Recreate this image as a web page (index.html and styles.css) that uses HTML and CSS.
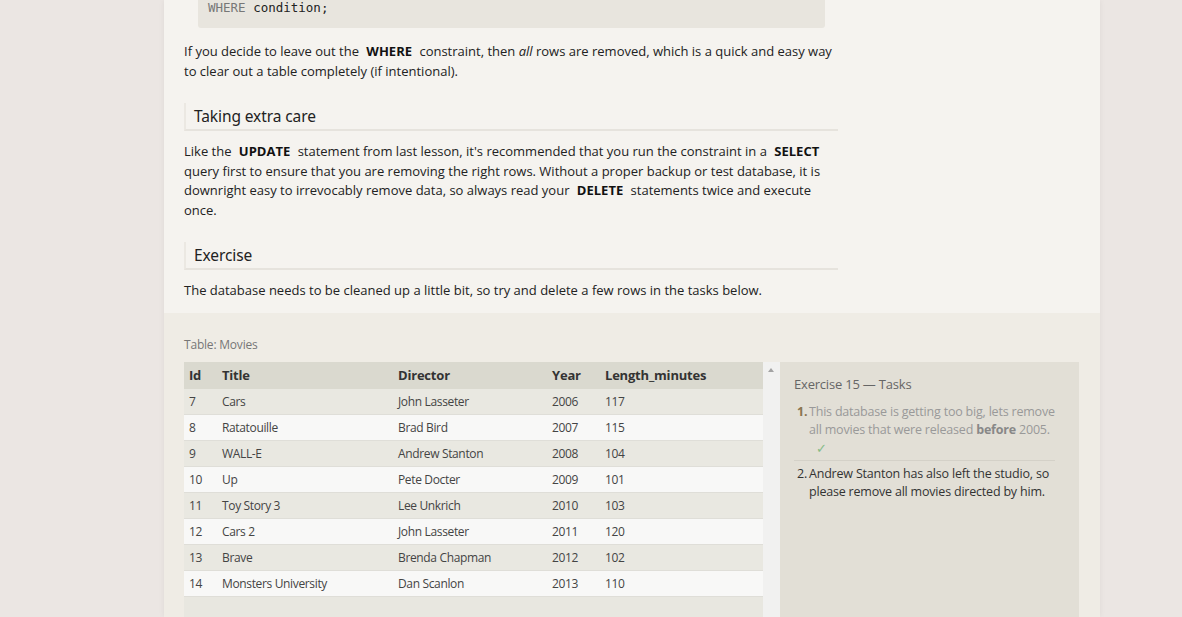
FILE: index.html
```html
<!DOCTYPE html>
<html>
<head>
<meta charset="utf-8">
<link rel="stylesheet" href="styles.css">
</head>
<body>
<div class="page">
  <div class="lesson">
    <pre class="code"><span class="kw">WHERE</span> condition;</pre>
    <p>If you decide to leave out the <b class="sql">WHERE</b> constraint, then <i>all</i> rows are removed, which is a quick and easy way to clear out a table completely (if intentional).</p>
    <h3 class="heading">Taking extra care</h3>
    <p>Like the <b class="sql">UPDATE</b> statement from last lesson, it's recommended that you run the constraint in a <b class="sql">SELECT</b> query first to ensure that you are removing the right rows. Without a proper backup or test database, it is downright easy to irrevocably remove data, so always read your <b class="sql">DELETE</b> statements twice and execute once.</p>
    <h3 class="heading">Exercise</h3>
    <p>The database needs to be cleaned up a little bit, so try and delete a few rows in the tasks below.</p>
  </div>
  <div class="exercise">
    <div class="table-label">Table: Movies</div>
    <div class="workarea">
      <div class="table-wrap">
        <table class="movies">
          <thead>
            <tr><th class="c-id">Id</th><th class="c-title">Title</th><th class="c-dir">Director</th><th class="c-year">Year</th><th>Length_minutes</th></tr>
          </thead>
          <tbody>
            <tr><td>7</td><td>Cars</td><td>John Lasseter</td><td>2006</td><td>117</td></tr>
            <tr><td>8</td><td>Ratatouille</td><td>Brad Bird</td><td>2007</td><td>115</td></tr>
            <tr><td>9</td><td>WALL-E</td><td>Andrew Stanton</td><td>2008</td><td>104</td></tr>
            <tr><td>10</td><td>Up</td><td>Pete Docter</td><td>2009</td><td>101</td></tr>
            <tr><td>11</td><td>Toy Story 3</td><td>Lee Unkrich</td><td>2010</td><td>103</td></tr>
            <tr><td>12</td><td>Cars 2</td><td>John Lasseter</td><td>2011</td><td>120</td></tr>
            <tr><td>13</td><td>Brave</td><td>Brenda Chapman</td><td>2012</td><td>102</td></tr>
            <tr><td>14</td><td>Monsters University</td><td>Dan Scanlon</td><td>2013</td><td>110</td></tr>
          </tbody>
        </table>
      </div>
      <div class="scrollbar"><span class="arrow"></span></div>
      <div class="tasks">
        <div class="tasks-title">Exercise 15 — Tasks</div>
        <ol class="task-list">
          <li class="done"><span class="num">1.</span><div>This database is getting too big, lets remove all movies that were released <b>before</b> 2005.<div class="check">✓</div></div></li>
          <li><span class="num">2.</span><div>Andrew Stanton has also left the studio, so please remove all movies directed by him.</div></li>
        </ol>
      </div>
    </div>
  </div>
</div>
</body>
</html>
```
FILE: styles.css
```css
html, body {
  margin: 0;
  padding: 0;
  background: #ebe6e3;
  height: 100%;
  overflow: hidden;
}
body {
  font-family: "Open Sans", "Noto Sans", sans-serif;
  color: #222;
}
.page {
  width: 936px;
  margin-left: 164px;
  background: #f5f3ef;
  box-shadow: 0 0 6px rgba(0,0,0,0.06);
  height: 617px;
  overflow: hidden;
  display: flex;
  flex-direction: column;
}
.lesson {
  padding: 0 262px 0 20px;
}
.code {
  margin: 0 0 0 14px;
  width: 627px;
  box-sizing: border-box;
  background: #e8e5de;
  height: 28px;
  padding: 0 10px;
  font-family: "DejaVu Sans Mono", monospace;
  font-size: 12.5px;
  line-height: 16px;
  color: #222;
  border-radius: 0 0 3px 3px;
}
.code .kw { color: #777; }
p {
  margin: 14px 0 0 0;
  font-size: 13px;
  line-height: 19.5px;
  letter-spacing: 0;
}
.sql {
  font-weight: 700;
  padding: 0 4px;
  color: #111;
}
.heading {
  margin: 22px 0 0 0;
  font-family: "Noto Sans", sans-serif;
  font-weight: 400;
  font-size: 15.5px;
  line-height: 26px;
  padding: 0 0 0 8px;
  border-left: 2px solid #ebe8e2;
  border-bottom: 2px solid #e6e3dd;
  color: #222;
  letter-spacing: -0.1px;
}
.heading + p { margin-top: 11px; }
.exercise {
  margin-top: 12px;
  flex: 1;
  min-height: 0;
  background: #efece5;
  padding: 23px 21px 0 20px;
}
.table-label {
  font-size: 12px;
  color: #777;
  letter-spacing: -0.2px;
  height: 17px;
  line-height: 17px;
}
.workarea {
  margin-top: 9px;
  display: flex;
  height: 260px;
}
.table-wrap {
  width: 579px;
  background: #e8e7e0;
}
.movies {
  width: 100%;
  border-collapse: collapse;
  font-size: 12px;
  letter-spacing: -0.35px;
  color: #444;
}
.movies th {
  text-align: left;
  font-weight: 700;
  font-size: 13px;
  letter-spacing: -0.2px;
  color: #333;
  background: #dad9cf;
  height: 27px;
  padding: 0 0 0 5px;
}
.movies td {
  height: 25px;
  padding: 0 0 0 5px;
  border-bottom: 1px solid #dfded8;
}
.movies tbody tr:nth-child(odd) td { background: #e9e8e1; }
.movies tbody tr:nth-child(even) td { background: #f8f8f7; }
.c-id { width: 28px; }
.c-title { width: 171px; }
.c-dir { width: 149px; }
.c-year { width: 48px; }
.scrollbar {
  width: 17px;
  background: #f1f1f0;
  position: relative;
}
.arrow {
  position: absolute;
  left: 5px;
  top: 6px;
  width: 0; height: 0;
  border-left: 3.5px solid transparent;
  border-right: 3.5px solid transparent;
  border-bottom: 4px solid #a3a3a3;
}
.tasks {
  width: 299px;
  background: #e2dfd6;
  padding: 13px 14px 0 14px;
  box-sizing: border-box;
}
.tasks-title {
  font-size: 13px;
  color: #666;
  letter-spacing: -0.2px;
}
.task-list {
  list-style: none;
  margin: 10px 0 0 0;
  padding: 0;
  font-size: 12.5px;
  line-height: 18px;
  letter-spacing: -0.2px;
  color: #333;
}
.task-list li {
  display: flex;
  padding: 0 0 3px 3px;
}
.task-list li .num { width: 12px; flex: none; }
.task-list li.done {
  color: #999;
  border-bottom: 1px solid #d4d1c8;
  margin-right: 10px;
}
.task-list li.done .num { color: #8a7550; font-weight: 700; }
.task-list li.done b { color: #888; }
.task-list li + li { padding-top: 4px; }
.check {
  color: #86bb86;
  font-size: 13px;
  line-height: 18px;
  padding-left: 7px;
}
```
